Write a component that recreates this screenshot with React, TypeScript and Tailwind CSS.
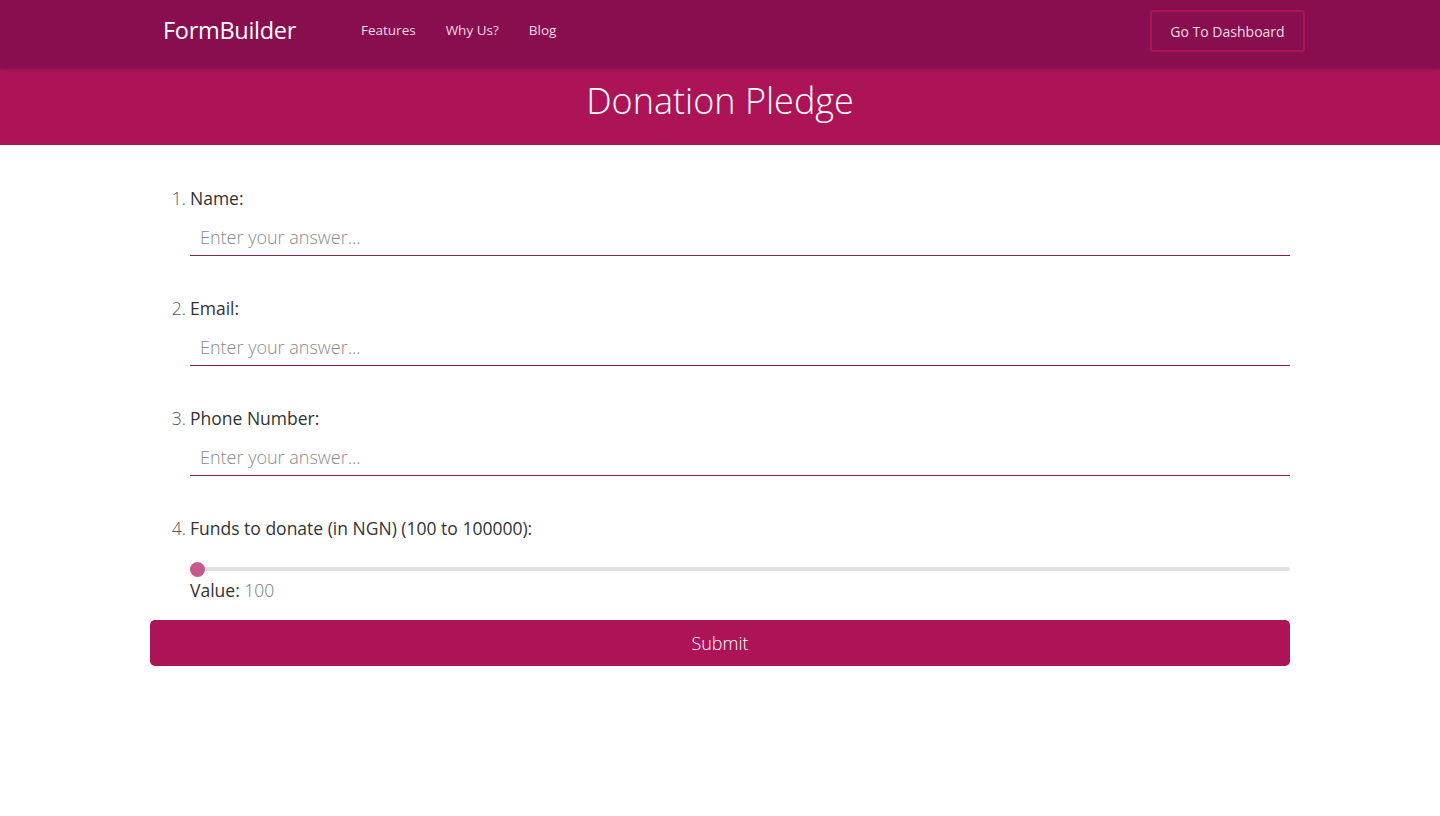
import { useState } from "react";

const questions = ["Name:", "Email:", "Phone Number:"];

function TextQuestion({ n, label }: { n: number; label: string }) {
  return (
    <li className="flex">
      <span className="w-[40px] shrink-0 text-right pr-[4px] text-[17.5px] font-light text-[#555] leading-[24px]">
        {n}.
      </span>
      <div className="flex-1">
        <label className="block text-[17.5px] text-[#333] leading-[24px]">{label}</label>
        <input
          type="text"
          placeholder="Enter your answer..."
          className="mt-[13px] w-full h-[33px] px-[10px] pb-[4px] text-[18px] font-light text-[#333] placeholder:text-[#8a8a8a] border-b border-[#8e1a4f] outline-none bg-transparent"
        />
      </div>
    </li>
  );
}

export default function App() {
  const [value, setValue] = useState(100);
  const pct = ((value - 100) / (100000 - 100)) * 100;

  return (
    <div className="min-h-[816px] bg-white" style={{ fontFamily: '"Open Sans", "Noto Sans", sans-serif' }}>
      <header className="relative z-10 h-[68px] bg-[#880e4f] shadow-[0_1px_3px_rgba(0,0,0,0.25)]">
        <div className="w-[1140px] mx-auto h-full flex items-start pt-[10px]">
          <span className="ml-[13px] mt-[4px] text-[23.5px] leading-[32px] text-white tracking-[-0.3px]">
            FormBuilder
          </span>
          <nav className="ml-[65px] mt-[10px] flex gap-[30px] text-[13.5px] leading-[20px] text-[#f3dbe6]">
            <a>Features</a>
            <a>Why Us?</a>
            <a>Blog</a>
          </nav>
          <button className="ml-auto mr-[-15px] h-[42px] w-[155px] border-2 border-[#ad1457] rounded-[3px] text-[14px] text-[#f3dbe6]">
            Go To Dashboard
          </button>
        </div>
      </header>
      <div className="h-[77px] bg-[#ad1457] flex items-center justify-center">
        <h1 className="text-[36px] font-light text-white leading-none pb-[12px]">Donation Pledge</h1>
      </div>
      <main className="w-[1140px] mx-auto pt-[41px]">
        <ol className="flex flex-col gap-[40px]">
          {questions.map((q, i) => (
            <TextQuestion key={q} n={i + 1} label={q} />
          ))}
          <li className="flex">
            <span className="w-[40px] shrink-0 text-right pr-[4px] text-[17.5px] font-light text-[#555] leading-[24px]">
              4.
            </span>
            <div className="flex-1">
              <label className="block text-[17.5px] text-[#333] leading-[24px]">
                Funds to donate (in NGN) (100 to 100000):
              </label>
              <div className="relative mt-[22px] h-[14px] flex items-center">
                <div className="w-full h-[4px] rounded-full bg-[#e0e0e0]" />
                <div
                  className="absolute top-0 w-[15px] h-[15px] rounded-full bg-[#c65b8b]"
                  style={{ left: `calc(${pct}% * 0.987)` }}
                />
                <input
                  type="range"
                  min={100}
                  max={100000}
                  value={value}
                  onChange={(e) => setValue(Number(e.target.value))}
                  className="absolute inset-0 w-full opacity-0"
                />
              </div>
              <p className="mt-[2px] text-[17.5px] text-[#333] leading-[24px]">
                Value: <span className="font-light text-[#777]">{value}</span>
              </p>
            </div>
          </li>
        </ol>
        <button className="mt-[18px] w-full h-[46px] rounded-[5px] bg-[#ad1457] text-white text-[18px] font-light">
          Submit
        </button>
      </main>
    </div>
  );
}
